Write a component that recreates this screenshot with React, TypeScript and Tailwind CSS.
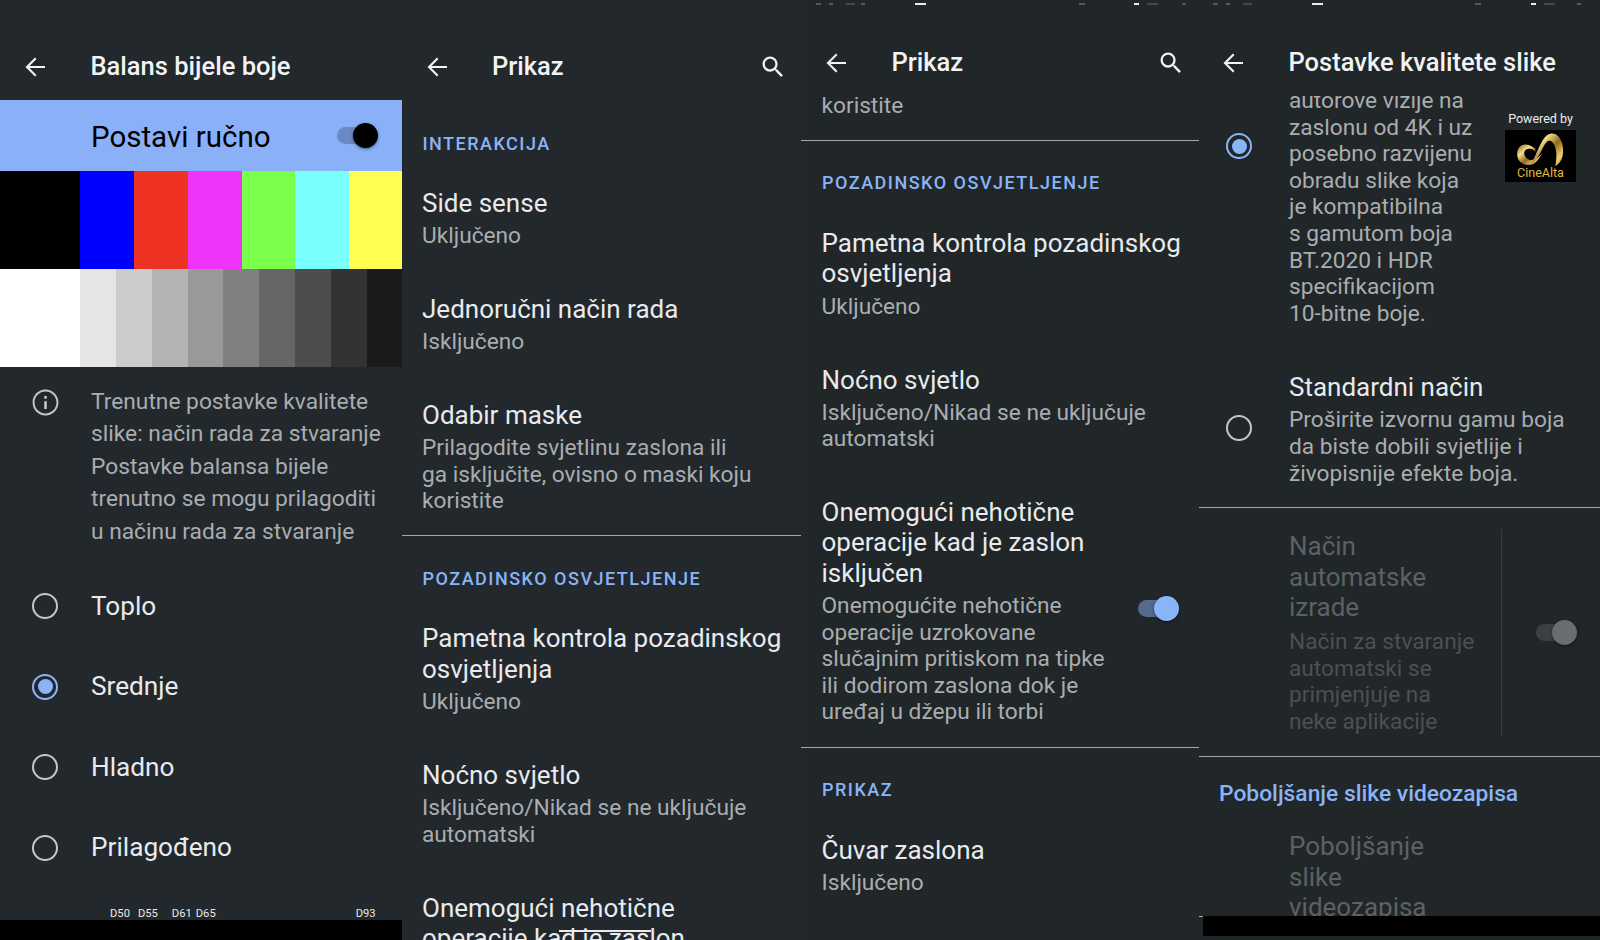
import React from "react";

const Back = () => (
  <svg width="30" height="30" viewBox="0 0 24 24" fill="none" stroke="#f1f3f4" strokeWidth="1.7"><path d="M20 12H6M12.600 5l-7 7 7 7" /></svg>
);
const Search = () => (
  <svg width="28" height="28" viewBox="0 0 24 24" fill="#f1f3f4"><path d="M15.500 14h-.790l-.280-.270A6.470 6.470 0 0 0 16 9.500 6.500 6.500 0 1 0 9.500 16c1.610 0 3.090-.590 4.230-1.570l.270.280v.790l5 4.990L20.490 19l-4.990-5zm-6 0C7.010 14 5 11.990 5 9.500S7.010 5 9.500 5 14 7.010 14 9.500 11.990 14 9.500 14z" /></svg>
);
const Radio = ({ on }: { on?: boolean }) => (
  <div className={`flex h-[26px] w-[26px] items-center justify-center rounded-full border-[2.5px] ${on ? "border-[#8ab4f8]" : "border-[#c4c7c9]"}`}>
    {on && <div className="h-[15px] w-[15px] rounded-full bg-[#8ab4f8]" />}
  </div>
);
const Toggle = ({ track, thumb }: { track: string; thumb: string }) => (
  <div className="relative h-[17px] w-[37px] rounded-full" style={{ background: track }}>
    <div className="absolute right-[-4px] top-[-4px] h-[25px] w-[25px] rounded-full shadow-[0_1px_3px_rgba(0,0,0,0.5)]" style={{ background: thumb }} />
  </div>
);
const Header = ({ title, h, search, pl, pt }: { title: string; h: string; search?: boolean; pl: string; pt: string }) => (
  <div className={`relative z-10 flex shrink-0 items-center ${h} ${pl} ${pt}`}>
    <div className="flex w-[70.5px] shrink-0"><Back /></div>
    <div className="flex-1 text-[25.5px] font-medium leading-[31px] text-[#f1f3f4]">{title}</div>
    {search && <div className="mr-[14px]"><Search /></div>}
  </div>
);
const Sum = ({ children }: { children: React.ReactNode }) => (
  <div className="mt-[4.5px] whitespace-pre-line text-[22.7px] leading-[26.6px] text-[#a9adb0]">{children}</div>
);
const Ttl = ({ children }: { children: React.ReactNode }) => (
  <div className="whitespace-pre-line text-[26px] leading-[30.6px] text-[#e8eaed]">{children}</div>
);
const Item = ({ t, s }: { t: string; s?: string }) => (
  <div className="py-[22.25px] pl-[20.5px]">
    <Ttl>{t}</Ttl>
    {s && <Sum>{s}</Sum>}
  </div>
);
const Sec = ({ children, first }: { children: React.ReactNode; first?: boolean }) => (
  <div className={`pl-[21px] text-[18px] font-medium uppercase leading-[20px] tracking-[1.5px] text-[#8ab4f8] ${first ? "pb-[11.5px] pt-[34px]" : "pb-[12.5px] pt-[32.5px]"}`}>{children}</div>
);

const Logo = () => (
  <div className="flex flex-col items-center">
    <div className="mb-[3px] text-[12.5px] leading-[16px] text-[#eceeef]">Powered by</div>
    <div className="flex h-[52px] w-[71px] flex-col items-center bg-black">
      <svg width="71" height="37" viewBox="0 0 71 39" className="shrink-0">
        <defs>
          <linearGradient id="gold" x1="0" x2="1" y1="0" y2="1">
            <stop offset="0" stopColor="#8a6518" />
            <stop offset="0.3" stopColor="#f6dc8c" />
            <stop offset="0.55" stopColor="#8f6a1e" />
            <stop offset="0.8" stopColor="#f2cf72" />
            <stop offset="1" stopColor="#b98a2c" />
          </linearGradient>
        </defs>
        <path d="M30 20C22 12 10 14 11 27c1 9 11 12 18 8 3-2 6-6 9-11-5 6-11 9-15 7-6-3-6-10-1-11 3-.5 6 0 8 3z" fill="url(#gold)" />
        <path d="M25 37c7-11 12-32 21-33 9-2 15 11 13 22-1 6-4 10-8 12 2-8 2-20-3-25-4-4-7 0-10 6-4 8-8 15-13 18z" fill="url(#gold)" />
      </svg>
      <div className="text-[12.5px] leading-[11px] text-[#e8b83a]">CineAlta</div>
    </div>
  </div>
);

const colors = [["#000000", 80], ["#0000ff", 54], ["#ee3322", 54], ["#ee33fb", 53.5], ["#7aff4d", 53.5], ["#7affff", 54], ["#ffff51", 52.5]] as const;
const greys = [["#ffffff", 80], ["#e5e5e5", 36], ["#cccccc", 36], ["#b3b3b3", 35.5], ["#999999", 35.5], ["#808080", 36], ["#666666", 36], ["#4d4d4d", 36], ["#333333", 36], ["#1a1a1a", 34.5]] as const;

const Col1 = () => (
  <div className="flex h-[940px] w-[401.5px] shrink-0 flex-col overflow-hidden">
    <Header title="Balans bijele boje" h="h-[100px]" pl="pl-[20px]" pt="pt-[33px]" />
    <div className="flex h-[71px] shrink-0 items-center justify-between bg-[#8ab0f8] pl-[91px] pr-[27.5px]">
      <div className="mt-[3px] text-[29.5px] leading-[34px] text-black">Postavi ručno</div>
      <div className="mt-[-1px]"><Toggle track="#6b88c4" thumb="#000" /></div>
    </div>
    <div className="flex h-[98px] shrink-0">
      {colors.map(([c, w]) => <div key={c} className="h-full" style={{ background: c, width: w }} />)}
    </div>
    <div className="flex h-[98px] shrink-0">
      {greys.map(([c, w]) => <div key={c} className="h-full" style={{ background: c, width: w }} />)}
    </div>
    <div className="flex shrink-0 pl-[29.5px] pt-[19px]">
      <svg width="31" height="31" viewBox="0 0 24 24" fill="#c4c7c9" className="mt-[1px] shrink-0"><path d="M11 7h2v2h-2zm0 4h2v6h-2zm1-9C6.480 2 2 6.480 2 12s4.480 10 10 10 10-4.480 10-10S17.520 2 12 2zm0 18.500c-4.680 0-8.500-3.820-8.500-8.500S7.320 3.500 12 3.500s8.500 3.820 8.500 8.500-3.820 8.500-8.500 8.500z" /></svg>
      <div className="ml-[30.5px] whitespace-pre-line text-[22.75px] leading-[32.4px] text-[#a9adb0]">{"Trenutne postavke kvalitete\nslike: način rada za stvaranje\nPostavke balansa bijele\ntrenutno se mogu prilagoditi\nu načinu rada za stvaranje"}</div>
    </div>
    <div className="flex shrink-0 flex-col pt-[18px]">
      {[["Toplo", false], ["Srednje", true], ["Hladno", false], ["Prilagođeno", false]].map(([t, on]) => (
        <div key={t as string} className="flex h-[80.5px] items-center pl-[32px]">
          <Radio on={on as boolean} />
          <div className="ml-[33px] text-[26.2px] leading-[31px] text-[#e8eaed]">{t}</div>
        </div>
      ))}
    </div>
    <div className="flex-1" />
    <div className="flex h-[12px] shrink-0 pl-[110px] text-[11.2px] leading-[12px] text-[#e8eaed]">
      <span>D50</span><span className="ml-[8px]">D55</span><span className="ml-[14px]">D61</span><span className="ml-[4px]">D65</span><span className="ml-[140px]">D93</span>
    </div>
    <div className="h-[20px] shrink-0 bg-black" />
  </div>
);

const Col2 = () => (
  <div className="relative h-[940px] w-[399.5px] shrink-0 overflow-hidden">
    <Header title="Prikaz" h="h-[100px]" pl="pl-[20px]" pt="pt-[33px]" search />
    <div className="border-b-[1.5px] border-[#a5a8aa]">
      <Sec first>Interakcija</Sec>
      <Item t="Side sense" s="Uključeno" />
      <Item t="Jednoručni način rada" s="Isključeno" />
      <div className="pb-[20px] pl-[20.5px] pt-[22.25px]">
        <Ttl>Odabir maske</Ttl>
        <Sum>{"Prilagodite svjetlinu zaslona ili\nga isključite, ovisno o maski koju\nkoristite"}</Sum>
      </div>
    </div>
    <Sec>Pozadinsko osvjetljenje</Sec>
    <Item t={"Pametna kontrola pozadinskog\nosvjetljenja"} s="Uključeno" />
    <Item t="Noćno svjetlo" s={"Isključeno/Nikad se ne uključuje\nautomatski"} />
    <Item t={"Onemogući nehotične\noperacije kad je zaslon"} />
    <div className="absolute left-[157px] top-[930px] h-[2px] w-[92px] bg-[#e8eaed]" />
  </div>
);

const Marks = ({ items }: { items: [number, number, string][] }) => (
  <>
    {items.map(([l, w, c]) => (
      <div key={l} className="absolute top-[3px] h-[1.5px]" style={{ left: l, width: w, background: c }} />
    ))}
  </>
);

const Col3 = () => (
  <div className="relative flex h-[940px] w-[398px] shrink-0 flex-col overflow-hidden bg-[#212629]">
    <Marks items={[[15, 5, "#55595c"], [28, 4, "#55595c"], [45, 9, "#45494c"], [60, 4, "#55595c"], [114, 11, "#e8eaed"], [278, 6, "#55595c"], [333, 5, "#e8eaed"], [346, 11, "#45494c"], [381, 4, "#55595c"]]} />
    <Header title="Prikaz" h="h-[96px]" pl="pl-[20px]" pt="pt-[29px]" search />
    <div className="min-h-0 flex-1 overflow-hidden">
      <div className="mt-[-3px] border-b-[1.5px] border-[#a5a8aa] pb-[20px] pl-[20.5px] text-[22.7px] leading-[26.6px] text-[#a9adb0]">koristite</div>
      <Sec>Pozadinsko osvjetljenje</Sec>
      <Item t={"Pametna kontrola pozadinskog\nosvjetljenja"} s="Uključeno" />
      <Item t="Noćno svjetlo" s={"Isključeno/Nikad se ne uključuje\nautomatski"} />
      <div className="flex items-center justify-between border-b-[1.5px] border-[#a5a8aa] pb-[21px] pl-[20.5px] pr-[24px] pt-[21.5px]">
        <div>
          <Ttl>{"Onemogući nehotične\noperacije kad je zaslon\nisključen"}</Ttl>
          <Sum>{"Onemogućite nehotične\noperacije uzrokovane\nslučajnim pritiskom na tipke\nili dodirom zaslona dok je\nuređaj u džepu ili torbi"}</Sum>
        </div>
        <div className="mb-[6px]"><Toggle track="#566a8c" thumb="#8ab4f8" /></div>
      </div>
      <Sec>Prikaz</Sec>
      <Item t="Čuvar zaslona" s="Isključeno" />
    </div>
  </div>
);

const Col4 = () => (
  <div className="relative flex h-[940px] flex-1 flex-col overflow-hidden bg-[#212629]">
    <Marks items={[[14, 5, "#55595c"], [27, 4, "#55595c"], [44, 9, "#45494c"], [113, 11, "#e8eaed"], [276, 6, "#55595c"], [332, 5, "#e8eaed"], [345, 11, "#45494c"], [378, 4, "#55595c"]]} />
    <Header title="Postavke kvalitete slike" h="h-[96px]" pl="pl-[19px]" pt="pt-[29px]" />
    <div className="min-h-0 flex-1 overflow-hidden">
      <div className="mt-[-8px] flex">
        <div className="ml-[27px] mt-[45px] shrink-0"><Radio on /></div>
        <div className="ml-[37px] w-[216px] shrink-0 whitespace-pre-line text-[22.7px] leading-[26.6px] text-[#a9adb0]">{"autorove vizije na\nzaslonu od 4K i uz\nposebno razvijenu\nobradu slike koja\nje kompatibilna\ns gamutom boja\nBT.2020 i HDR\nspecifikacijom\n10-bitne boje."}</div>
        <div className="mt-[23px] shrink-0"><Logo /></div>
      </div>
      <div className="flex border-b-[1.5px] border-[#a5a8aa] pb-[20px] pt-[45px]">
        <div className="ml-[27px] mt-[43px] shrink-0"><Radio /></div>
        <div className="ml-[37px]">
          <Ttl>Standardni način</Ttl>
          <Sum>{"Proširite izvornu gamu boja\nda biste dobili svjetlije i\nživopisnije efekte boja."}</Sum>
        </div>
      </div>
      <div className="flex h-[249px] items-center border-b-[1.5px] border-[#a5a8aa] pl-[90px]">
        <div className="w-[212px] shrink-0 pt-[2px]">
          <div className="whitespace-pre-line text-[26px] leading-[30.6px] text-[#5d6164]">{"Način\nautomatske\nizrade"}</div>
          <div className="mt-[6px] whitespace-pre-line text-[22.7px] leading-[26.6px] text-[#4c5053]">{"Način za stvaranje\nautomatski se\nprimjenjuje na\nneke aplikacije"}</div>
        </div>
        <div className="h-[207px] w-px bg-[#383c3f]" />
        <div className="ml-[34px]"><Toggle track="#3c4043" thumb="#6b6c6e" /></div>
      </div>
      <div className="pl-[20px] pt-[24px] text-[22.8px] font-medium leading-[26px] text-[#8ab4f8]">Poboljšanje slike videozapisa</div>
      <div className="h-[108.5px] overflow-hidden whitespace-pre-line pl-[90px] pt-[24px] text-[26px] leading-[30.6px] text-[#5d6164]">{"Poboljšanje\nslike\nvideozapisa"}</div>
      <div className="flex">
        <div className="h-px w-[4px] bg-[#a5a8aa]" />
        <div className="h-[20px] flex-1 bg-black" />
      </div>
    </div>
  </div>
);

export default function App() {
  return (
    <div className="flex h-[940px] w-[1600px] overflow-hidden bg-[#23282c]" style={{ fontFamily: 'Roboto, "Noto Sans", sans-serif' }}>
      <Col1 />
      <Col2 />
      <Col3 />
      <Col4 />
    </div>
  );
}
